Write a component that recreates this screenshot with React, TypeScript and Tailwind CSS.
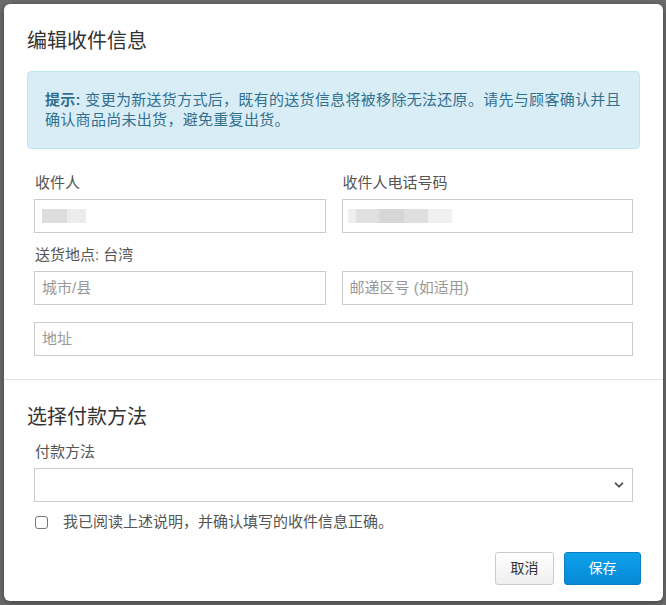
import { ChevronDown } from "lucide-react";

const font = "font-['Liberation_Sans','Noto_Sans_CJK_SC',sans-serif]";

const Label = ({ children }: { children: React.ReactNode }) => (
  <div className="text-[15px] leading-[20px] text-[#555] mb-[6px] pl-[1px]">{children}</div>
);

const Field = ({ placeholder, children }: { placeholder?: string; children?: React.ReactNode }) => (
  <div className="h-[34px] border border-[#ccc] bg-white flex items-center px-[7px] text-[15px] text-[#999]">
    {children ?? placeholder}
  </div>
);

const Blur = ({ blocks }: { blocks: [number, string][] }) => (
  <div className="flex h-[14px]">
    {blocks.map(([w, c], i) => (
      <span key={i} className="h-full" style={{ width: w, background: c }} />
    ))}
  </div>
);

export default function App() {
  return (
    <div className={`${font} w-[666px] h-[605px] bg-[#6d6d6d] pt-[4px] pl-[4px] overflow-hidden`}>
      <div className="w-[659px] h-[597px] bg-white rounded-[6px] shadow-[0_2px_8px_rgba(0,0,0,0.4)] flex flex-col">
        <div className="px-[23px] pt-[23px]">
          <h2 className="text-[20px] leading-[28px] text-[#333]">编辑收件信息</h2>
          <div className="mt-[16px] border border-[#bce8f1] bg-[#d9edf7] rounded-[4px] px-[17px] py-[18px] text-[15px] leading-[20px] tracking-[0.3px] text-[#31708f]">
            <b>提示:</b> 变更为新送货方式后，既有的送货信息将被移除无法还原。请先与顾客确认并且确认商品尚未出货，避免重复出货。
          </div>
        </div>

        <div className="px-[30px] pt-[24px] pb-[23px] border-b border-[#e5e5e5]">
          <div className="grid grid-cols-2 gap-x-[16px]">
            <div>
              <Label>收件人</Label>
              <Field>
                <Blur blocks={[[25, "#dedede"], [19, "#ececec"]]} />
              </Field>
            </div>
            <div>
              <Label>收件人电话号码</Label>
              <div className="h-[34px] border border-[#ccc] bg-white flex items-center px-[5px]">
                <Blur blocks={[[8, "#efefef"], [23, "#e0e0e0"], [25, "#d6d6d6"], [24, "#dfdfdf"], [24, "#f0f0f0"]]} />
              </div>
            </div>
          </div>
          <div className="mt-[12px]">
            <Label>送货地点: 台湾</Label>
          </div>
          <div className="grid grid-cols-2 gap-x-[16px] mt-[1px]">
            <Field placeholder="城市/县" />
            <Field placeholder="邮递区号 (如适用)" />
          </div>
          <div className="mt-[17px]">
            <Field placeholder="地址" />
          </div>
        </div>

        <div className="px-[23px] pt-[23px]">
          <h2 className="text-[20px] leading-[28px] text-[#333]">选择付款方法</h2>
        </div>
        <div className="px-[30px] pt-[11px]">
          <Label>付款方法</Label>
          <div className="h-[34px] border border-[#ccc] bg-white flex items-center justify-end pr-[6px]">
            <ChevronDown size={14} strokeWidth={3} className="text-[#444]" />
          </div>
          <div className="flex items-center mt-[10px] h-[20px]">
            <span className="w-[13px] h-[13px] border border-[#767676] rounded-[3px] ml-[1px]" />
            <span className="ml-[15px] text-[15px] text-[#555]">我已阅读上述说明，并确认填写的收件信息正确。</span>
          </div>
        </div>

        <div className="flex justify-end gap-[10px] px-[22px] mt-[20px]">
          <button className="w-[59px] h-[33px] border border-[#ccc] rounded-[3px] bg-gradient-to-b from-white to-[#efefef] text-[14px] text-[#333]">
            取消
          </button>
          <button className="w-[77px] h-[33px] border border-[#0a7fc4] rounded-[3px] bg-gradient-to-b from-[#0ea1ea] to-[#0789d6] text-[14px] text-white">
            保存
          </button>
        </div>
      </div>
    </div>
  );
}
